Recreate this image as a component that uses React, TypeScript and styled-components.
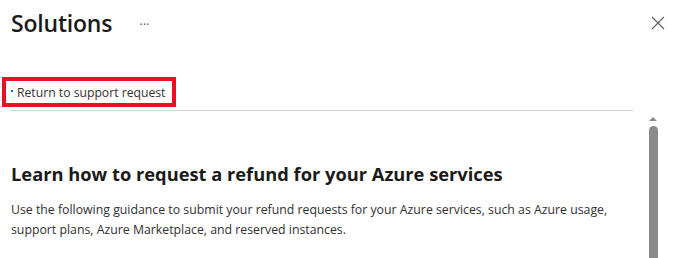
import React from "react";
import styled, { createGlobalStyle } from "styled-components";

const Global = createGlobalStyle`
  html, body { margin: 0; padding: 0; background: #fff; }
  body { font-family: "Open Sans", "Noto Sans", sans-serif; color: #1b1a19; overflow: hidden; }
`;

const Page = styled.div`
  width: 675px;
  height: 258px;
  display: flex;
  flex-direction: column;
  overflow: hidden;
`;

const Header = styled.div`
  display: flex;
  align-items: center;
  height: 46px;
  padding: 0 10px 0 11px;
`;

const Title = styled.h1`
  margin: 0;
  font-size: 23px;
  font-weight: 600;
  color: #1b1a19;
  letter-spacing: -0.2px;
`;

const More = styled.span`
  margin-left: 27px;
  font-size: 13px;
  color: #605e5c;
  margin-top: 2px;
`;

const Close = styled.button`
  margin-left: auto;
  border: 0;
  background: none;
  padding: 0;
  width: 14px;
  height: 14px;
  display: flex;
  cursor: pointer;
`;

const BackRow = styled.div`
  margin-top: 31px;
  padding: 0 0 0 2px;
  display: flex;
`;

const Highlight = styled.div`
  display: inline-flex;
  align-items: center;
  border: 4px solid #e81123;
  height: 22px;
  padding: 0 7px 0 5px;
  font-size: 12.2px;
  color: #323130;
`;

const Dot = styled.span`
  width: 2px;
  height: 2px;
  background: #0078d4;
  margin-right: 4px;
  margin-top: -2px;
`;

const Separator = styled.div`
  margin: 3px 42px 0 10px;
  height: 1px;
  background: #d2d0ce;
`;

const Body = styled.div`
  flex: 1;
  display: flex;
  min-height: 0;
`;

const Content = styled.div`
  flex: 1;
  padding: 50px 0 0 11px;
`;

const Heading = styled.h2`
  margin: 0 0 14px;
  font-size: 18.3px;
  font-weight: 700;
  color: #1b1a19;
`;

const Para = styled.p`
  margin: 0;
  font-size: 12.3px;
  line-height: 20px;
  color: #323130;
`;

const Scrollbar = styled.div`
  width: 12px;
  margin-right: 16px;
  display: flex;
  flex-direction: column;
  align-items: center;
  padding-top: 6px;
`;

const Arrow = styled.div`
  width: 0;
  height: 0;
  border-left: 4px solid transparent;
  border-right: 4px solid transparent;
  border-bottom: 4px solid #8a8a8a;
`;

const Thumb = styled.div`
  margin-top: 5px;
  width: 9px;
  flex: 1;
  background: #8a8a8a;
  border-radius: 5px 5px 0 0;
`;

export default function App() {
  return (
    <Page>
      <Global />
      <Header>
        <Title>Solutions</Title>
        <More>···</More>
        <Close aria-label="Close">
          <svg width="14" height="14" viewBox="0 0 14 14">
            <path d="M1 1 L13 13 M13 1 L1 13" stroke="#605e5c" strokeWidth="1.1" />
          </svg>
        </Close>
      </Header>
      <BackRow>
        <Highlight>
          <Dot />
          Return to support request
        </Highlight>
      </BackRow>
      <Separator />
      <Body>
        <Content>
          <Heading>Learn how to request a refund for your Azure services</Heading>
          <Para>
            Use the following guidance to submit your refund requests for your Azure services, such as Azure usage,
            support plans, Azure Marketplace, and reserved instances.
          </Para>
        </Content>
        <Scrollbar>
          <Arrow />
          <Thumb />
        </Scrollbar>
      </Body>
    </Page>
  );
}
